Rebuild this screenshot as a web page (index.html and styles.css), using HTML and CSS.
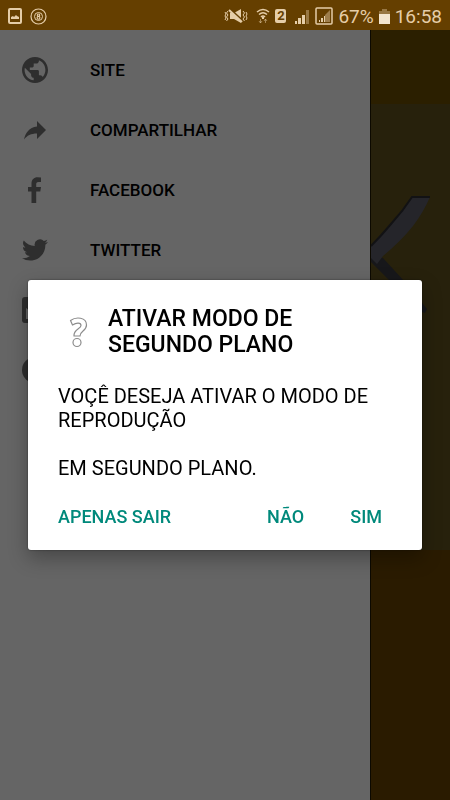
FILE: index.html
```html
<!DOCTYPE html>
<html lang="pt-BR">

<head>
  <meta charset="UTF-8">
  <meta name="viewport" content="width=device-width, initial-scale=1.0">
  <title>Ativar modo de segundo plano</title>
  <link rel="stylesheet" href="styles.css">
</head>

<body>
  <header class="status-bar">
    <div class="status-left">
      <svg width="14" height="16" viewBox="0 0 14 16">
        <rect x="1" y="1" width="12" height="14" rx="1" fill="none" stroke="currentColor" stroke-width="2" />
        <path d="M3 11V9l2-1 1 1 2-2 1 1 2 1v2z" fill="currentColor" />
      </svg>
      <svg width="17" height="17" viewBox="0 0 17 17" fill="none" stroke="currentColor">
        <circle cx="8.500" cy="8.500" r="7.500" stroke-width="1.200" />
        <circle cx="8.500" cy="8.500" r="4" stroke-width="1" />
        <circle cx="8.500" cy="7.200" r="1.200" stroke-width="1.100" />
        <circle cx="8.500" cy="9.800" r="1.400" stroke-width="1.100" />
      </svg>
    </div>
    <div class="status-right">
      <svg width="24" height="16" viewBox="0 0 24 16">
        <path d="M6 5h4l7-4v14l-7-4H6z" fill="currentColor" />
        <path d="M6 1l14 13" stroke="#653f00" stroke-width="2" />
        <path d="M5 2l13 12" stroke="currentColor" stroke-width="2" />
        <path d="M4 3L2.500 5 4 7 2.500 9 4 11 2.500 13M1 4l1 2-1 2 1 2-1 2M19 3l1.500 2L19 7l1.500 2-1.500 2 1.500 2M22 4l1 2-1 2 1 2-1 2" fill="none" stroke="currentColor" />
      </svg>
      <svg class="wifi" width="14" height="16" viewBox="0 0 14 16" fill="none" stroke="currentColor" stroke-width="1.600">
        <path d="M1 4q6-5 12 0M3 6.500q4-3.500 8 0M5 9q2-2 4 0" />
        <path d="M7 9v2" stroke-width="2" />
        <path d="M4.500 11v4M3 13l1.500 2L6 13M9.500 15v-4M8 13l1.500-2 1.500 2" stroke-width="1" opacity=".5" />
      </svg>
      <span class="sim">2</span>
      <svg class="signal" width="16" height="15" viewBox="0 0 16 15" fill="currentColor">
        <path d="M1 12h2v3H1zM4 9h3v6H4zM8 6h3v9H8z" />
        <path d="M12 1h3v14h-3z" opacity=".4" />
      </svg>
      <svg width="18" height="18" viewBox="0 0 18 18">
        <rect x="1" y="1" width="16" height="16" rx="1" fill="none" stroke="currentColor" stroke-width="1.500" />
        <path d="M4 13h1v2H4zM6 11h2v4H6zM9 9h1v6H9z" fill="currentColor" />
        <path d="M10 8l5-5v12h-5z" fill="currentColor" opacity=".45" />
      </svg>
      <span class="percent">67%</span>
      <svg width="11" height="15" viewBox="0 0 11 15">
        <path d="M3 0h5v2h3v13H0V2h3z" fill="currentColor" opacity=".4" />
        <path d="M0 5h11v10H0z" fill="#f3e5cf" />
      </svg>
      <span class="clock">16:58</span>
    </div>
  </header>

  <main class="screen">
    <nav class="drawer">
      <ul class="menu">
        <li>
          <a href="#site">
            <svg class="icon" viewBox="2 2 20 20"><path d="M12 2C6.480 2 2 6.480 2 12s4.480 10 10 10 10-4.480 10-10S17.520 2 12 2zm-1 17.930c-3.950-.490-7-3.850-7-7.930 0-.620.080-1.210.210-1.790L9 15v1c0 1.100.900 2 2 2v1.930zm6.900-2.540c-.260-.810-1-1.390-1.900-1.390h-1v-3c0-.550-.450-1-1-1H8v-2h2c.550 0 1-.450 1-1V7h2c1.100 0 2-.900 2-2v-.410c2.930 1.190 5 4.060 5 7.410 0 2.080-.800 3.970-2.100 5.390z" /></svg>
            SITE
          </a>
        </li>
        <li>
          <a href="#compartilhar">
            <svg class="icon" viewBox="0 0 26 26"><path d="M15 4l9 9-9 9v-5.500C9 16.500 5 18.500 2 22.500 3.500 16 7 10.500 15 9.500z" /></svg>
            COMPARTILHAR
          </a>
        </li>
        <li>
          <a href="#facebook">
            <svg class="icon" viewBox="0 0 26 26"><path d="M19 .5v4.500h-2.500c-2 0-2.300 1-2.300 2.300V10H19l-.7 4.500h-4.100V26H9.500V14.500H6V10h3.500V6.500C9.500 2.700 12 .3 15.500.3z" /></svg>
            FACEBOOK
          </a>
        </li>
        <li>
          <a href="#twitter">
            <svg class="icon" viewBox="0 0 24 24"><path d="M23.950 4.570a10 10 0 0 1-2.820.770 4.960 4.960 0 0 0 2.160-2.720c-.950.550-2 .950-3.130 1.180a4.920 4.920 0 0 0-8.380 4.480C7.690 8.090 4.070 6.130 1.640 3.160a4.920 4.920 0 0 0 1.520 6.570 4.900 4.900 0 0 1-2.230-.610v.060a4.920 4.920 0 0 0 3.950 4.830 5 5 0 0 1-2.210.080 4.940 4.940 0 0 0 4.600 3.420A9.870 9.870 0 0 1 0 19.540a14 14 0 0 0 7.550 2.210c9.050 0 14-7.500 14-13.980l-.020-.640a10 10 0 0 0 2.420-2.560z" /></svg>
            TWITTER
          </a>
        </li>
        <li>
          <a href="#email" aria-label="E-mail">
            <svg class="icon" viewBox="0 0 26 26"><path fill-rule="evenodd" d="M3 0h20q3 0 3 3v20q0 3-3 3H3q-3 0-3-3V3q0-3 3-3zM4 11v11h18V11l-9 6z" /></svg>
          </a>
        </li>
        <li>
          <a href="#sair" aria-label="Sair">
            <svg class="icon" viewBox="0 0 26 26"><circle cx="13" cy="13" r="13" /></svg>
          </a>
        </li>
      </ul>
    </nav>
    <div class="player">
      <div class="toolbar"></div>
      <div class="artwork">
        <svg width="80" height="140" viewBox="0 0 80 140">
          <path d="M0 68l12 6 22 24 22 27-2 4-8-3L18 96 0 78z" fill="#17171a" />
          <path d="M41 13h18q-7 16-17 29-12 15-30 30L6 80 0 74V62q10-10 20-22 12-15 21-27z" fill="#25252a" />
          <path d="M59 13H41q-9 14-21 27Q10 52 0 62" fill="none" stroke="#121214" stroke-width="2" />
        </svg>
      </div>
      <div class="controls"></div>
    </div>
  </main>

  <div class="overlay">
    <section class="dialog" role="alertdialog" aria-labelledby="dialog-title" aria-describedby="dialog-text">
      <div class="dialog-header">
        <svg class="question" width="40" height="32" viewBox="0 0 40 32" fill="none" stroke="#8c8c8c" stroke-width="1.200">
          <path d="M12.500 4.500C18 .5 28.500 1 28.500 9c0 6-6.500 6-6.500 11h-6c-.5-7 7-7 7-10.500 0-3-4.500-3-8.500-.5z" stroke-linejoin="round" />
          <circle cx="19" cy="26.500" r="4" />
        </svg>
        <h1 id="dialog-title">ATIVAR MODO DE SEGUNDO PLANO</h1>
      </div>
      <div class="dialog-text" id="dialog-text">
        <p>VOÇÊ DESEJA ATIVAR O MODO DE REPRODUÇÃO</p>
        <p>EM SEGUNDO PLANO.</p>
      </div>
      <div class="dialog-buttons">
        <button type="button" class="leave">APENAS SAIR</button>
        <button type="button">NÃO</button>
        <button type="button">SIM</button>
      </div>
    </section>
  </div>
</body>

</html>
```
FILE: styles.css
```css
* {
  box-sizing: border-box;
}

body {
  margin: 0;
  min-height: 100vh;
  display: flex;
  flex-direction: column;
  font-family: Roboto, "Liberation Sans", sans-serif;
  background-color: #2a1b00;
}

/* status bar */
.status-bar {
  height: 30px;
  padding: 2px 8px 0;
  display: flex;
  justify-content: space-between;
  align-items: center;
  background-color: #653f00;
  color: #e5cda8;
}

.status-left,
.status-right {
  display: flex;
  align-items: center;
}

.status-left {
  gap: 8px;
}

.status-right {
  gap: 5px;
}

.wifi {
  margin-left: 3px;
}

.signal {
  margin-left: 3px;
}

.sim {
  width: 11px;
  height: 14px;
  border-radius: 2px;
  background-color: #e5cda8;
  color: #653f00;
  font-size: 13px;
  font-weight: 700;
  line-height: 14px;
  text-align: center;
}

.percent,
.clock {
  font-size: 19px;
}

/* drawer and the page behind it */
.screen {
  flex: 1;
  display: flex;
}

.drawer {
  flex: 1;
  background-color: #656565;
}

.menu {
  margin: 0;
  padding: 10px 0;
  list-style: none;
}

.menu a {
  height: 60px;
  padding: 0 22px;
  display: flex;
  align-items: center;
  gap: 42px;
  color: #000;
  font-size: 17px;
  font-weight: 500;
  text-decoration: none;
}

.icon {
  width: 26px;
  height: 26px;
  fill: #2e2e2e;
}

.player {
  width: 80px;
  display: grid;
  grid-template-rows: 74px 446px 1fr;
  border-left: 1px solid #0c0900;
}

.toolbar {
  background-color: #2b1f00;
}

.artwork {
  padding-top: 80px;
  overflow: hidden;
  background-color: #27210c;
}

.controls {
  background-color: #2a1b00;
}

/* dialog */
.overlay {
  position: fixed;
  top: 30px;
  right: 0;
  bottom: 0;
  left: 0;
  padding: 0 28px;
  display: flex;
  align-items: center;
}

.dialog {
  width: 100%;
  padding: 26px 30px 10px;
  border-radius: 3px;
  background-color: #fff;
  color: #000;
  box-shadow: 0 8px 20px rgba(0, 0, 0, 0.3), 0 0 2px rgba(0, 0, 0, 0.5);
}

.dialog-header {
  display: flex;
  align-items: center;
  gap: 10px;
}

.question {
  flex-shrink: 0;
}

.dialog-header h1 {
  margin: 0;
  font-size: 23px;
  font-weight: 500;
  line-height: 26px;
}

.dialog-text {
  margin-top: 26px;
  display: grid;
  gap: 24px;
  font-size: 20px;
  line-height: 24px;
}

.dialog-text p {
  margin: 0;
}

.dialog-buttons {
  margin-top: 12px;
  padding-right: 10px;
  display: flex;
  gap: 46px;
}

.dialog-buttons button {
  height: 48px;
  padding: 0;
  border: none;
  background: none;
  color: #00897b;
  font-family: inherit;
  font-size: 18px;
  font-weight: 500;
  cursor: pointer;
}

.dialog-buttons .leave {
  margin-right: auto;
}
```
